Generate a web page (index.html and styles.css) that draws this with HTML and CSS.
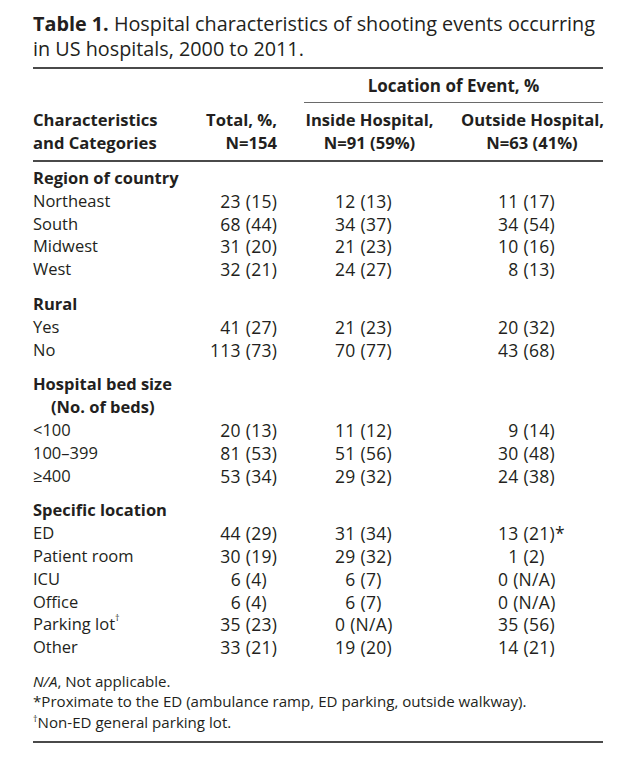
FILE: index.html
```html
<!DOCTYPE html>
<html>
<head>
<meta charset="utf-8">
<link rel="stylesheet" href="styles.css">
</head>
<body>
<div class="page">
  <p class="title"><b>Table 1.</b> Hospital characteristics of shooting events occurring<br>in US hospitals, 2000 to 2011.</p>
  <table class="tbl">
    <colgroup>
      <col class="c1"><col class="c2"><col class="c3"><col class="c4">
    </colgroup>
    <thead>
      <tr class="h-top">
        <th></th><th></th>
        <th colspan="2" class="span">Location of Event, %</th>
      </tr>
      <tr class="h-cols">
        <th class="h-label">Characteristics<br>and Categories</th>
        <th class="h-total">Total, %,<br>N=154</th>
        <th class="h-in">Inside Hospital,<br>N=91 (59%)</th>
        <th class="h-out">Outside Hospital,<br>N=63 (41%)</th>
      </tr>
    </thead>
    <tbody>
      <tr class="sec first"><td colspan="4">Region of country</td></tr>
      <tr><td>Northeast</td><td class="n2"><i>0</i>23 (15)</td><td class="n3">12 (13)</td><td class="n4">11 (17)</td></tr>
      <tr><td>South</td><td class="n2"><i>0</i>68 (44)</td><td class="n3">34 (37)</td><td class="n4">34 (54)</td></tr>
      <tr><td>Midwest</td><td class="n2"><i>0</i>31 (20)</td><td class="n3">21 (23)</td><td class="n4">10 (16)</td></tr>
      <tr><td>West</td><td class="n2"><i>0</i>32 (21)</td><td class="n3">24 (27)</td><td class="n4"><i>0</i>8 (13)</td></tr>

      <tr class="sec"><td colspan="4">Rural</td></tr>
      <tr><td>Yes</td><td class="n2"><i>0</i>41 (27)</td><td class="n3">21 (23)</td><td class="n4">20 (32)</td></tr>
      <tr><td>No</td><td class="n2">113 (73)</td><td class="n3">70 (77)</td><td class="n4">43 (68)</td></tr>

      <tr class="sec"><td colspan="4">Hospital bed size</td></tr>
      <tr class="sub"><td colspan="4">(No. of beds)</td></tr>
      <tr><td>&lt;100</td><td class="n2"><i>0</i>20 (13)</td><td class="n3">11 (12)</td><td class="n4"><i>0</i>9 (14)</td></tr>
      <tr><td>100–399</td><td class="n2"><i>0</i>81 (53)</td><td class="n3">51 (56)</td><td class="n4">30 (48)</td></tr>
      <tr><td>≥400</td><td class="n2"><i>0</i>53 (34)</td><td class="n3">29 (32)</td><td class="n4">24 (38)</td></tr>

      <tr class="sec"><td colspan="4">Specific location</td></tr>
      <tr><td>ED</td><td class="n2"><i>0</i>44 (29)</td><td class="n3">31 (34)</td><td class="n4">13 (21)*</td></tr>
      <tr><td>Patient room</td><td class="n2"><i>0</i>30 (19)</td><td class="n3">29 (32)</td><td class="n4"><i>0</i>1 (2)</td></tr>
      <tr><td>ICU</td><td class="n2"><i>00</i>6 (4)</td><td class="n3"><i>0</i>6 (7)</td><td class="n4">0 (N/A)</td></tr>
      <tr><td>Office</td><td class="n2"><i>00</i>6 (4)</td><td class="n3"><i>0</i>6 (7)</td><td class="n4">0 (N/A)</td></tr>
      <tr><td>Parking lot<sup>†</sup></td><td class="n2"><i>0</i>35 (23)</td><td class="n3">0 (N/A)</td><td class="n4">35 (56)</td></tr>
      <tr><td>Other</td><td class="n2"><i>0</i>33 (21)</td><td class="n3">19 (20)</td><td class="n4">14 (21)</td></tr>
    </tbody>
  </table>
  <div class="notes">
    <p><em>N/A</em>, Not applicable.</p>
    <p>*Proximate to the ED (ambulance ramp, ED parking, outside walkway).</p>
    <p><sup>†</sup>Non-ED general parking lot.</p>
  </div>
</div>
</body>
</html>
```

FILE: styles.css
```css
html, body {
  margin: 0;
  padding: 0;
  background: #ffffff;
}

body {
  font-family: "Open Sans", "Liberation Sans", sans-serif;
  color: #231f20;
}

.page {
  width: 570px;
  margin-left: 33px;
  padding-top: 11px;
}

.title {
  margin: 0;
  font-size: 19.8px;
  line-height: 25px;
  white-space: nowrap;
}

.title b {
  font-weight: 700;
}

.tbl {
  margin-top: 6px;
  width: 570px;
  border-collapse: collapse;
  table-layout: fixed;
  border-top: 2px solid #4a4a4a;
  font-size: 16.5px;
}

.c1 { width: 167px; }
.c2 { width: 104px; }
.c3 { width: 143px; }
.c4 { width: 156px; }

.tbl th,
.tbl td {
  padding: 0;
  line-height: 22.8px;
  white-space: nowrap;
  vertical-align: top;
}

.tbl th {
  font-weight: 700;
  font-size: 16.6px;
  line-height: 23px;
}

.h-top th {
  padding-top: 5px;
  padding-bottom: 5px;
}

.h-top .span {
  text-align: center;
  font-size: 17px;
  border-bottom: 1px solid #6a6a6a;
}

.h-cols th {
  padding-top: 5px;
  padding-bottom: 6px;
  border-bottom: 2px solid #4a4a4a;
}

.h-label { text-align: left; }
.h-total { text-align: right; padding-right: 27px !important; }
.h-in { text-align: center; padding-right: 12px !important; }
.h-out { text-align: center; padding-left: 14px !important; }

.sec td {
  font-weight: 700;
  padding-top: 12px;
}

.sec.first td {
  padding-top: 5px;
}

.sub td {
  font-weight: 700;
  padding-left: 18px;
}

.n2, .n3, .n4 {
  font-size: 17.5px;
  letter-spacing: 0.3px;
}

.n2 { padding-left: 10px !important; }
.n3 { padding-left: 31px !important; }
.n4 { padding-left: 51px !important; }

.tbl i {
  font-style: normal;
  visibility: hidden;
}

.tbl sup {
  font-size: 9px;
  line-height: 0;
  vertical-align: 9px;
}

.notes {
  margin-top: 12px;
  padding-bottom: 9px;
  border-bottom: 2px solid #4a4a4a;
  font-size: 15.1px;
}

.notes p {
  margin: 0;
  line-height: 20.5px;
}

.notes sup {
  font-size: 9px;
  line-height: 0;
  vertical-align: 6px;
}
```
